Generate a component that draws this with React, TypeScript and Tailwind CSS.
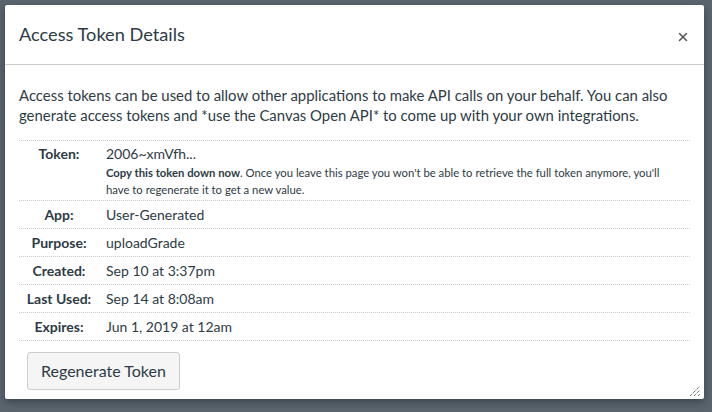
import { X } from "lucide-react";

const rows = [
  { label: "App:", value: "User-Generated" },
  { label: "Purpose:", value: "uploadGrade" },
  { label: "Created:", value: "Sep 10 at 3:37pm" },
  { label: "Last Used:", value: "Sep 14 at 8:08am" },
  { label: "Expires:", value: "Jun 1, 2019 at 12am" },
];

export default function App() {
  return (
    <div
      className="h-[412px] w-[712px] overflow-hidden bg-[#5a656d] p-[5px] pr-[8px] text-[#2d3b45]"
      style={{ fontFamily: "Lato, 'Open Sans', sans-serif" }}
    >
      <div className="relative flex h-[394px] w-[699px] flex-col rounded-[2px] bg-white shadow-[0_3px_8px_rgba(0,0,0,0.35)]">
        <div className="flex h-[60px] items-center justify-between border-b border-[#c7cdd1] px-[14px]">
          <h1 className="text-[18.2px] font-normal text-[#2d3b45]">Access Token Details</h1>
          <X size={14} strokeWidth={2.5} className="mt-[4px] text-[#555]" />
        </div>

        <div className="px-[14px] pt-[20px]">
          <p className="text-[14.9px] leading-[20px]">
            Access tokens can be used to allow other applications to make API calls on your behalf. You can also
            generate access tokens and *use the Canvas Open API* to come up with your own integrations.
          </p>

          <div className="mt-[15px] w-[671px] border-t border-dotted border-[#c7cdd1] text-[14px]">
            <div className="grid grid-cols-[80px_1fr] gap-x-[7px] border-b border-dotted border-[#c7cdd1] pb-[2px] pt-[3px]">
              <div className="text-center font-bold leading-[20px]">Token:</div>
              <div>
                <div className="leading-[20px]">2006~xmVfh...</div>
                <div className="text-[11.3px] leading-[17px]">
                  <span className="font-bold">Copy this token down now</span>. Once you leave this page you won't be able
                  to retrieve the full token anymore, you'll
                  <br />
                  have to regenerate it to get a new value.
                </div>
              </div>
            </div>
            {rows.map((r) => (
              <div
                key={r.label}
                className="grid h-[28px] grid-cols-[80px_1fr] items-center gap-x-[7px] border-b border-dotted border-[#c7cdd1]"
              >
                <div className="text-center font-bold">{r.label}</div>
                <div>{r.value}</div>
              </div>
            ))}
          </div>

          <button className="ml-[8px] mt-[11px] h-[38px] rounded-[3px] border border-[#c7cdd1] bg-[#f5f5f5] px-[13px] text-[16px] text-[#2d3b45]">
            Regenerate Token
          </button>
        </div>

        <svg
          className="absolute bottom-[2px] right-[3px]"
          width="12"
          height="12"
          viewBox="0 0 12 12"
          stroke="#333"
          strokeWidth="1"
          strokeDasharray="1 1"
        >
          <line x1="1" y1="11" x2="11" y2="1" />
          <line x1="5" y1="11" x2="11" y2="5" />
          <line x1="9" y1="11" x2="11" y2="9" />
        </svg>
      </div>
    </div>
  );
}
